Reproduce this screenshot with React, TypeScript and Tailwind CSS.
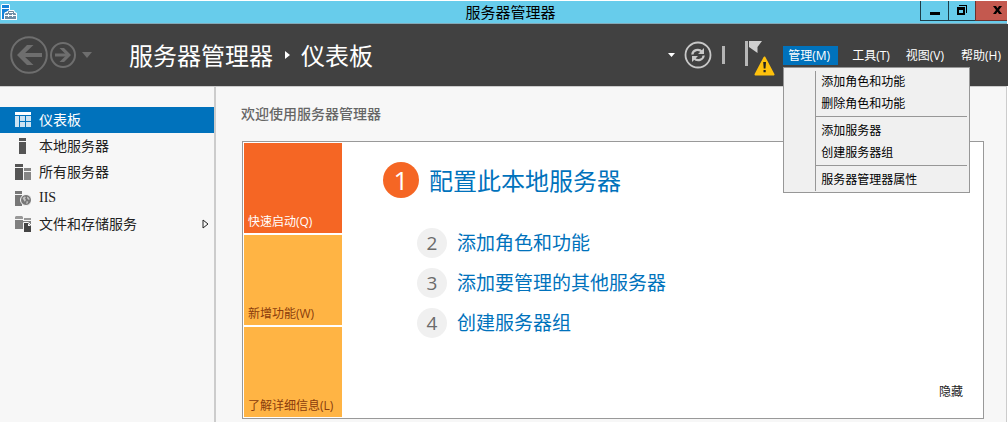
import { useState } from 'react'

const sidebarItems = [
  { id: 'dashboard', label: '仪表板', Icon: DashboardIcon },
  { id: 'local', label: '本地服务器', Icon: LocalServerIcon },
  { id: 'all', label: '所有服务器', Icon: AllServersIcon },
  { id: 'iis', label: 'IIS', Icon: IisIcon, serif: true },
  { id: 'files', label: '文件和存储服务', Icon: FileServicesIcon, expandable: true },
]

const manageMenu = [
  ['添加角色和功能', '删除角色和功能'],
  ['添加服务器', '创建服务器组'],
  ['服务器管理器属性'],
]

const steps = ['添加角色和功能', '添加要管理的其他服务器', '创建服务器组']

function DashboardIcon() {
  return (
    <svg width="16" height="16" viewBox="0 0 16 16" shapeRendering="crispEdges">
      <path fill="#fff" d="M0 0h16v3H0z" />
      <path fill="#cce3f2" d="M0 4h4v11H0zM5 4h5v5H5zM11 4h5v5h-5zM5 10h5v5H5zM11 10h5v5h-5z" />
    </svg>
  )
}

function LocalServerIcon() {
  return (
    <svg width="16" height="16" viewBox="0 0 16 16" shapeRendering="crispEdges">
      <path fill="#555" d="M4 0h7v3H4zM4 4h7v12H4z" />
    </svg>
  )
}

function AllServersIcon() {
  return (
    <svg width="16" height="16" viewBox="0 0 16 16" shapeRendering="crispEdges">
      <path fill="#555" d="M0 0h8v3H0zM0 4h8v12H0z" />
      <path fill="#858585" d="M9 4h7v3H9zM9 8h7v8H9z" />
    </svg>
  )
}

function IisIcon() {
  return (
    <svg width="16" height="16" viewBox="0 0 16 16">
      <path fill="#777" d="M0 1h7v3H0zM0 5h7v11H0z" />
      <circle cx="11" cy="10" r="5.5" fill="#777" stroke="#f7f7f7" />
      <path fill="#c4c4c4" d="M7.500 8l2-1.500 1.500.5-1 1.500 1 1.500-1.300 1.800-1.200-2zM12.200 6.500l2 1.500.3 2-1.500-.5-1-1.500zM11.500 11.200l1.800.4-1 2.200-1 .2z" />
    </svg>
  )
}

function FileServicesIcon() {
  return (
    <svg width="16" height="16" viewBox="0 0 16 16">
      <path fill="#999" d="M0 1l1-1h6l1 1v2H0zM9 2h7v2H9z" />
      <path fill="#808080" d="M0 4h8v9H0zM8 5h8v7H8z" />
      <path fill="#444" stroke="#f7f7f7" d="M8.500 6.500h5l3 3v7h-8z" />
      <path fill="#f7f7f7" d="M13 7v3h3z" />
    </svg>
  )
}

function AppIcon() {
  return (
    <svg width="17" height="17" viewBox="0 0 17 17" className="mt-[3px] ml-px self-start">
      <path fill="#fff" d="M1 0h7l1 1v5h4l1 2 2 1v7H0V1z" />
      <path fill="#1683d8" d="M1 1h7v3H1zM1 5h7v1L5 8H4l-1 2v5H1z" />
      <path fill="none" stroke="#6f8797" d="M7.500 9V7.500h5V9" />
      <path fill="#6f8ea5" d="M5 9h9l1 1v1h-3v-1h-1v1H8v-1H7v1H4v-1zM4 12h3v1h1v-1h3v1h1v-1h3v3H4z" />
    </svg>
  )
}

function TitleBar() {
  return (
    <div className="mt-px mr-px flex h-[23px] border-b border-[#82a9b8] bg-[#67cceb]">
      <div className="flex flex-1">
        <AppIcon />
      </div>
      <h1 className="pl-3.5 text-[15px] leading-[22px] text-black">服务器管理器</h1>
      <div className="flex flex-1 items-start justify-end">
        <button
          aria-label="最小化"
          className="flex h-5 w-[29px] items-end justify-center border-x border-b border-[#1c3d49] pb-[5px]"
        >
          <svg width="10" height="3">
            <path d="M0 0h10v3H0z" />
          </svg>
        </button>
        <button aria-label="还原" className="flex h-5 w-[26px] items-start justify-center border-b border-[#1c3d49] pt-1">
          <svg width="10" height="10" viewBox="0 0 10 10" shapeRendering="crispEdges">
            <path fillRule="evenodd" d="M0 2h8v8H0zM2 5v3h4V5z" />
            <path d="M2 0h8v8H9V1H2z" />
          </svg>
        </button>
        <button
          aria-label="关闭"
          className="flex h-5 w-8 items-start justify-center border-b border-l border-[#6b322d] bg-[#c4594f] pt-[5px] pl-3"
        >
          <svg width="9" height="8" viewBox="0 0 9 8">
            <path d="M0 0h3l1.500 2.200L6 0h3L6 4l3 4H6L4.500 5.800 3 8H0l3-4z" />
          </svg>
        </button>
      </div>
    </div>
  )
}

function ManageDropdown() {
  return (
    <div className="absolute top-[21px] left-0 z-10 w-[187px] border border-[#979797] bg-[#f0f0f0] pt-[3px] pr-0.5 pb-px pl-[31px]">
      <div role="menu" className="border-l border-[#979797]">
        {manageMenu.map((group, index) => (
          <div key={group[0]}>
            {index > 0 && <div className="mt-px mb-[3px] h-px bg-[#979797]" />}
            {group.map((label) => (
              <button
                key={label}
                role="menuitem"
                className="block h-[22px] w-full pl-[5px] text-left text-xs leading-[22px] text-black hover:bg-[#d5e8f5]"
              >
                {label}
              </button>
            ))}
          </div>
        ))}
      </div>
    </div>
  )
}

function Header() {
  const [menuOpen, setMenuOpen] = useState(true)

  return (
    <header className="flex h-[62px] items-center bg-[#414141] pr-[7px] pl-2.5 text-white">
      <button aria-label="后退">
        <svg width="38" height="38" viewBox="0 0 38 38" fill="none" stroke="#6e6e6e">
          <circle cx="19" cy="19" r="17.800" strokeWidth="2" />
          <path strokeWidth="4" d="M10 19h22" />
          <path fill="#6e6e6e" stroke="none" d="M7 19L17 9h6.500L13 19l10.500 10H17z" />
        </svg>
      </button>
      <button aria-label="前进" className="ml-0.5">
        <svg width="26" height="26" viewBox="0 0 26 26" fill="none" stroke="#6e6e6e">
          <circle cx="13" cy="13" r="12" strokeWidth="2" />
          <path strokeWidth="3" d="M5 13h14" />
          <path fill="#6e6e6e" stroke="none" d="M21 13l-7-7H9.500l7 7-7 7H14z" />
        </svg>
      </button>
      <button aria-label="历史记录" className="ml-1.5">
        <svg width="10" height="6">
          <path fill="#6e6e6e" d="M0 0h10L5 6z" />
        </svg>
      </button>

      <div className="ml-[37px] flex items-center pt-0.5 text-2xl leading-8 whitespace-nowrap">
        <span>服务器管理器</span>
        <svg width="5" height="8" className="mr-[11px] mb-0.5 ml-3">
          <path fill="#fff" d="M0 0l5 4-5 4z" />
        </svg>
        <span>仪表板</span>
      </div>

      <div className="ml-auto flex items-center">
        <button aria-label="刷新选项">
          <svg width="7" height="4">
            <path fill="#fff" d="M0 0h7L3.500 4z" />
          </svg>
        </button>
        <button aria-label="刷新" className="ml-[9px]">
          <svg width="28" height="28" viewBox="0 0 28 28" fill="none" stroke="#c8c8c8">
            <circle cx="14" cy="14" r="12.500" strokeWidth="1.800" />
            <path strokeWidth="2.200" d="M8.300 13.500c.4-4.200 6.200-6.600 9.700-2.700M19.700 14.500c-.4 4.200-6.200 6.600-9.700 2.700" />
            <path fill="#c8c8c8" stroke="none" d="M20 7v6h-6zM8 21v-6h6z" />
          </svg>
        </button>
        <span className="ml-2.5 h-[18px] w-[3px] bg-[#b4b4b4]" />
        <button aria-label="通知" className="mt-1.5 ml-5">
          <svg width="31" height="36" viewBox="0 0 31 36">
            <path fill="#b8b8b8" d="M0 1h3v25H0z" />
            <path fill="#d0d0d0" d="M4 1h13l-4.500 6v6L4 7z" />
            <path fill="#fec10d" stroke="#fec10d" strokeWidth="2" strokeLinejoin="round" d="M19.500 17.500l9 17h-18z" />
            <path fill="#222" d="M18.200 22h2.800l-.5 6.500h-1.800zM18.500 30h2.200v2.200h-2.200z" />
          </svg>
        </button>
        <nav className="ml-[7px] flex items-center text-xs leading-[19px] whitespace-nowrap">
          <div className="relative">
            <button
              aria-haspopup="menu"
              aria-expanded={menuOpen}
              onClick={() => setMenuOpen(!menuOpen)}
              className="block w-[55px] bg-[#0072bc] pl-[5px] text-left"
            >
              管理(M)
            </button>
            {menuOpen && <ManageDropdown />}
          </div>
          <button className="ml-3.5">工具(T)</button>
          <button className="ml-4">视图(V)</button>
          <button className="ml-[17px]">帮助(H)</button>
        </nav>
      </div>
    </header>
  )
}

function Sidebar() {
  return (
    <nav className="w-[216px] shrink-0 border-r-2 border-[#ccc] pt-5">
      {sidebarItems.map(({ id, label, Icon, serif, expandable }) => (
        <button
          key={id}
          className={`flex h-[26px] w-full items-center pr-[5px] pl-[15px] text-sm leading-5 ${
            id === 'dashboard' ? 'bg-[#0072bc] text-white' : 'text-[#222]'
          }`}
        >
          <Icon />
          <span className={serif ? "ml-2 font-['Liberation_Serif',serif]" : 'ml-2'}>{label}</span>
          {expandable && (
            <svg width="7" height="10" viewBox="0 0 7 10" className="ml-auto">
              <path fill="none" stroke="#222" d="M1 1v8l5-4z" />
            </svg>
          )}
        </button>
      ))}
    </nav>
  )
}

function WelcomePanel() {
  return (
    <section className="flex border border-[#999] bg-white p-px">
      <div className="flex w-[98px] shrink-0 flex-col gap-0.5 text-xs leading-4 text-[#8a3c0c]">
        <button className="flex h-[90px] items-end bg-[#f56624] pb-[3px] pl-1 text-white">快速启动(Q)</button>
        <button className="flex h-[90px] items-end bg-[#ffb444] pb-[3px] pl-1">新增功能(W)</button>
        <button className="flex h-[90px] items-end bg-[#ffb444] pb-[3px] pl-1">了解详细信息(L)</button>
      </div>

      <div className="flex flex-1 flex-col pt-[19px] pr-[19px] pb-4 pl-[41px]">
        <div className="flex items-center gap-2.5">
          <span className="flex size-9 items-center justify-center rounded-full bg-[#f56624] text-[26px] leading-9 text-white">
            1
          </span>
          <a href="#configure" className="pt-0.5 text-2xl leading-[34px] text-[#0072bc]">
            配置此本地服务器
          </a>
        </div>
        <ol className="mt-[30px] ml-[34px] flex flex-col gap-2.5">
          {steps.map((label, index) => (
            <li key={label} className="flex items-center gap-2.5">
              <span className="flex size-[30px] items-center justify-center rounded-full bg-[#f0f0f0] text-[19px] leading-[30px] text-[#6b6b6b]">
                {index + 2}
              </span>
              <a href={`#step-${index + 2}`} className="text-[19px] leading-[30px] text-[#0072bc]">
                {label}
              </a>
            </li>
          ))}
        </ol>
        <button className="mt-auto self-end text-xs leading-[18px] text-[#222]">隐藏</button>
      </div>
    </section>
  )
}

export default function App() {
  return (
    <div className="flex min-h-screen flex-col bg-white font-['Open_Sans','Noto_Sans_CJK_SC',sans-serif]">
      <TitleBar />
      <Header />
      <div className="mr-px flex flex-1 border-t border-r border-[#ccc] bg-[#f7f7f7]">
        <Sidebar />
        <main className="flex-1 pt-4 pr-[22px] pb-[3px] pl-[26px]">
          <h2 className="-ml-px mb-4 text-sm leading-[22px] font-medium text-[#666]">欢迎使用服务器管理器</h2>
          <WelcomePanel />
        </main>
      </div>
    </div>
  )
}
